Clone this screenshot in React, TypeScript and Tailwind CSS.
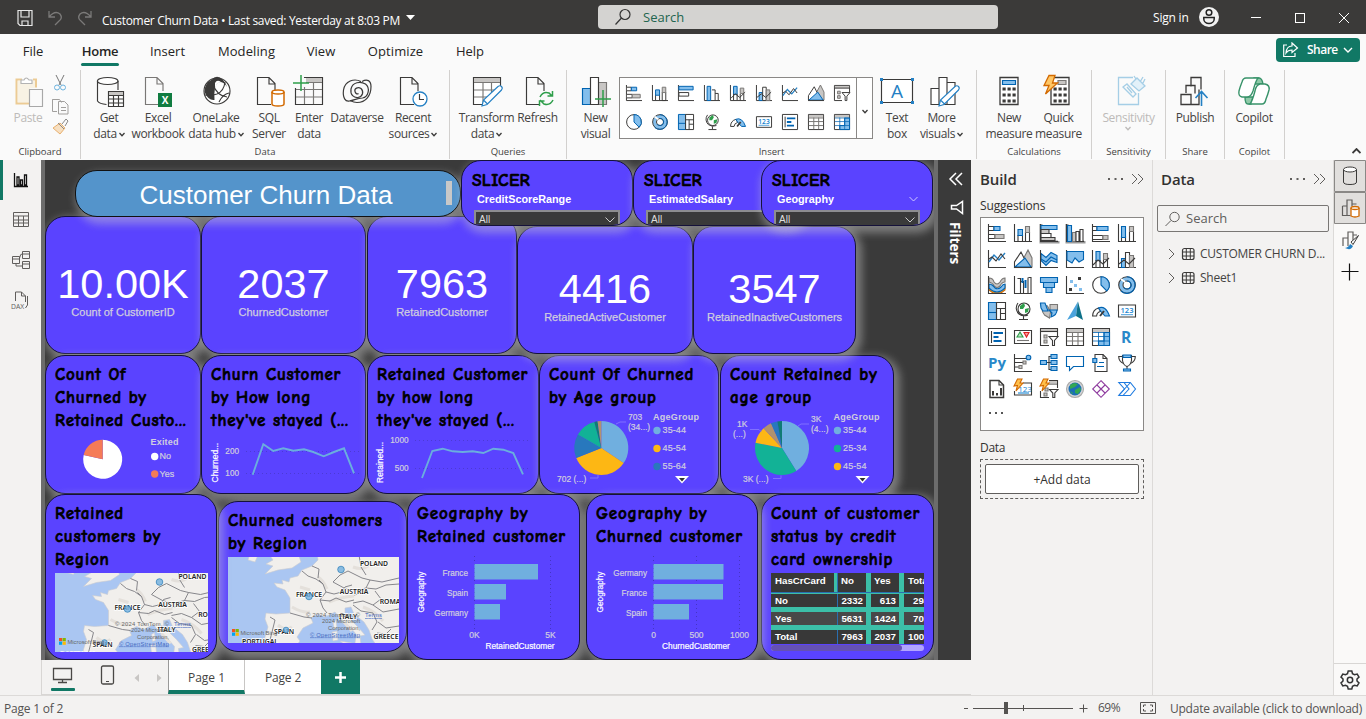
import React from "react";

type Kids = { children?: React.ReactNode };
const D = "#3b3a39";
const B = "#0063b1";
const F = "#83beec";
const G = "#c8c6c4";
const M = "#797775";
const O = "#d26900";

/* ---------- small visual icons, drawn on an 18 x 18 grid ---------- */
const Axis = () => <path d="M.5 0v17.5H18" stroke={D} />;
const Bolt = () => <path d="M3.5-1 8-1 6 3l3 0-7 8 1.500-5.500-3.500.5z" fill="#ffc04c" stroke={O} />;

const glyphs: Record<string, React.ReactNode> = {
  stackedBar: (<><Axis /><path d="M1 2.500h5v4H1" fill="#fff" stroke={D} /><path d="M6 2.500h6v4H6z" fill={F} stroke={B} /><path d="M1 10.500h6v4H1" fill="#fff" stroke={D} /><path d="M7 10.500h9v4H7z" fill={G} stroke={M} /></>),
  stackedCol: (<><Axis /><path d="M4 11v6M8.500 17v-6" stroke={D} /><path d="M4 5.500h4.500v6H4z" fill={F} stroke={B} /><path d="M11.500 8v9.500h4V8" stroke={D} /><path d="M11.500 2.500h4v6h-4z" fill={G} stroke={M} /></>),
  clusterBar: (<><Axis /><path d="M1 1.500h16v4H1z" fill={F} stroke={B} /><path d="M1 8.500h11v4H1z" fill="#fff" stroke={D} /></>),
  clusterCol: (<><Axis /><path d="M3.500 1.500h4v16h-4z" fill={F} stroke={B} /><path d="M9 5.500h3.500v12M12.500 9.500H16v8" stroke={D} /></>),
  clusterBarG: (<><path d="M1 0v18h17v-1" fill="none" stroke="#999" strokeWidth="3" /><Axis /><path d="M1 1.500h16v4H1z" fill={F} stroke={B} /><path d="M1 5.500h8v4H1z" fill={G} stroke={D} /><path d="M1 9.500h10v4H1z" fill="#fff" stroke={D} /><path d="M1 13.500h14v3H1z" fill={G} stroke={D} /></>),
  clusterColG: (<><path d="M1 0v18h17v-1" fill="none" stroke="#999" strokeWidth="3" /><Axis /><path d="M1.500 1.500h4v16h-4z" fill={F} stroke={B} /><path d="M6.500 8.500H10v9H6.500z" fill={G} stroke={M} /><path d="M10 7.500h3v10h-3zM14 5.500h3v12h-3z" fill="#fff" stroke={D} /></>),
  fullBar: (<><Axis /><path d="M1 2.500h4v4H1M1 11.500h10v4H1" fill="#fff" stroke={D} /><path d="M5 2.500h11v4H5z" fill={F} stroke={B} /><path d="M11 11.500h5v4h-5z" fill={G} stroke={M} /></>),
  fullCol: (<><Axis /><path d="M3.500 12v5.500h4V12M11.500 8v9.500h4V8" stroke={D} /><path d="M3.500 2.500h4v11h-4z" fill={F} stroke={B} /><path d="M11.500 2.500h4v5h-4z" fill={G} stroke={M} /></>),
  line: (<><Axis /><path d="M1 12 6 5l5 5 6-7" stroke="#2480c4" strokeWidth="1.400" /><path d="M1 9l3-2 4 4 5-7 4 5" stroke={D} /></>),
  area: (<><path d="M5 17 14 0l4 8v9z" fill={G} stroke={M} /><path d="M.5 17V12L7 2l4 8" fill="#fff" stroke={D} /><path d="M1 17 11 8l6 9z" fill={F} stroke={B} /><path d="M0 17.500h18" stroke={D} /></>),
  stackArea: (<><path d="M1 3.500l5 4 5-5 6 3v7l-6-2-5 5-5-5z" fill={F} stroke={B} /><path d="M1 9l5 3 5-5 6 3" stroke={B} /><Axis /></>),
  fullArea: (<><Axis /><path d="M1 1.500h16.500v8L13 12 9 8l-3 5-5-3z" fill={F} stroke={B} /></>),
  comboS: (<><Axis /><path d="M4 1.500h4v9H4z" fill={F} stroke={B} /><path d="M4 10v7M8 10v7M11.500 10v7M15.500 10v7" stroke={D} /><path d="M11.500 3.500h4v6h-4z" fill={G} stroke={M} /><path d="M1 15l5-5 5 4 6-6" stroke={D} /></>),
  comboC: (<><Axis /><path d="M3.500 8.500h4v9h-4z" fill={F} stroke={B} /><path d="M7.500 2.500h4v15h-4z" fill="#fff" stroke={D} /><path d="M11.500 5.500h4v12h-4z" fill={G} stroke={M} /><path d="M1 14l5-4 5 4 6-6" stroke={D} /></>),
  ribbon: (<><path d="M1 2q4 0 5 4 3 4 6 0 2-4 5-4v4q-3 0-5 4-3 3-6 0-1-3-5-4z" fill={G} stroke={M} /><path d="M1 9q4 0 6 5 3 3 6-1 1-3 4-4v5l-4 3H5l-4-3z" fill="#f0a030" stroke={O} /><path d="M1 8q3 0 6 4 3 2 6-1 2-3 4-3v4q-4 4-8 4T1 12z" fill={F} stroke={B} /><Axis /></>),
  waterfall: (<><Axis /><path d="M3.500 2.500h3v15M6.500 5.500h3v12M9.500 17v-11M14.500 1.500h2.500v16h-3v-16" stroke={D} /><path d="M8.500 2v5M11.500 4v8" stroke={B} strokeWidth="2" /></>),
  funnel: (<path d="M.5 1.500h17v5H.5zM3.500 6.500h11v5h-11zM6 11.500h6v5H6z" fill={F} stroke={B} />),
  scatter: (<><Axis /><path d="M4 4h3v3H4zM8 8h3v3H8zM13 12h3v3h-3z" fill={F} /><path d="M12 1h3v3h-3zM3 12h3v3H3z" fill={D} /></>),
  pie: (<><circle cx="9" cy="9" r="8.300" fill="#fff" stroke={D} /><path d="M9 .7A8.300 8.300 0 0 1 14.800 14.900L9 9z" fill={F} stroke={B} /></>),
  donut: (<><circle cx="9" cy="9" r="6.200" stroke={F} strokeWidth="4" /><circle cx="9" cy="9" r="8.300" stroke={D} /><circle cx="9" cy="9" r="4" stroke={D} /><path d="M9 .7A8.300 8.300 0 1 1 3 15M9 5a4 4 0 1 1-3 6.500" stroke={B} /><path d="M3 3l4 3" stroke="#fff" strokeWidth="2" /></>),
  treemap: (<><path d="M.5.5h8v17h-8z" fill={F} stroke={B} /><path d="M.5 10.500h8" stroke={B} /><path d="M8.500.5h9v17h-9zM8.500 6.500h9M12.500 6.500v11M12.500 11.500h5" stroke={D} /></>),
  map: (<><circle cx="10" cy="7" r="6" fill="#fff" stroke={D} /><path d="M6 4l4-3 1 3-2 3-3 0zM11 7l4-1-1 4-3 1z" fill="#2e9e4a" /><path d="M4 1a8 8 0 0 0 1 11q4 3 9 1M9.500 14v3M5 17.500h9" stroke={D} /></>),
  shape: (<><path d="M10 2.500h7.500V8L12 12l-2-2z" fill={G} stroke={M} /><path d="M.5 2l7 2 3 6-1 6-5-3Q2 10 2 7z" fill={G} stroke={M} /><path d="M.5 1 5 1l3 8-5 0-2-3zM9 8h8q0 5-6 7l1-4z" fill={F} stroke={B} /></>),
  arrow: (<><path d="M12-.5 1 18l9-4z" fill="#4ba3dd" /><path d="M12-.5 10 14l7 4z" fill="#0d7189" /></>),
  gauge: (<><path d="M.6 14a8.400 8.400 0 0 1 6-8l2 3.500a5 5 0 0 0-4 4.500z" fill="#fff" stroke={D} /><path d="M6.500 6q7-3 11 8h-4.500L9 9.500z" fill={F} stroke={B} /><path d="M8 14l4-5" stroke={D} strokeWidth="2" /></>),
  card: (<><path d="M.5 3h17v12H.5z" fill="#fff" stroke={D} /><text x="9" y="10.800" fontSize="7.500" fontFamily="Open Sans, sans-serif" fontWeight="600" fill="#1683d0" textAnchor="middle">123</text><path d="M3 12.700h12" stroke="#1683d0" strokeWidth=".8" /></>),
  multi: (<><path d="M.5.5h17v17H.5z" fill="#fff" stroke={D} /><path d="M3.500 3v12" stroke={D} /><path d="M5.500 5h9.500M5.500 9h5M5.500 13h8" stroke={B} strokeWidth="2" /></>),
  kpi: (<><path d="M.5 2.500h17v13H.5z" fill="#fff" stroke={D} /><path d="M6 4l3 5H3z" fill="#bfe5c5" stroke="#2e9e4a" /><path d="M10 4.500h5l-2.500 4.500z" fill="#f9a0a0" stroke="#d22" /><path d="M3 12.500h12" stroke={M} /></>),
  slicer: (<><path d="M17.500 8V.5H.5v17H9" stroke={D} /><path d="M1 1h16v2.500H1z" fill={G} /><path d="M.5 3.500h17" stroke={D} /><path d="M4 7h3v3H4zM4 12h3v3H4z" fill={G} stroke={M} /><path d="M9 8.500h9l-3.500 4v5h-2v-5z" fill="#fff" stroke={D} /></>),
  table: (<><path d="M.5.5h17v17H.5z" fill="#fff" stroke={D} /><path d="M1 1h16v3H1z" fill={G} /><path d="M1 4.500h16M1 8.500h16M1 13h16M6.500 4v13M12 4v13" stroke={M} /></>),
  matrix: (<><path d="M.5.5h17v17H.5z" fill="#fff" stroke={D} /><path d="M1 1h16v3H1z" fill={G} /><path d="M12 4.500h5.500v13h-11V13H12z" fill={F} stroke={B} /><path d="M1 4.500h16M1 8.500h16M1 13h16M6.500 4v13M12 4v13" stroke={B} strokeWidth=".8" /></>),
  r: <text x="8" y="14.500" fontSize="15.500" fontWeight="700" fontFamily="Open Sans, sans-serif" textAnchor="middle" fill="#2988c9">R</text>,
  py: <text x="9" y="13.500" fontSize="15" fontWeight="700" fontFamily="Open Sans, sans-serif" textAnchor="middle" fill="#2988c9">Py</text>,
  influencers: (<><path d="M.5 0v17.500H18M1 4.500h11M1 8.500h9M1 13h5" stroke={D} /><circle cx="14.500" cy="3.500" r="2.300" fill={F} stroke={B} /><path d="M9 7h3v3H9zM5 11.500h3v3H5z" fill={G} stroke={M} /></>),
  decomp: (<><path d="M6 8.500h5M9 8.500v-6h3M9 8.500v7h3" stroke={D} /><path d="M.5 6.500h6v4h-6zM11 .5h6v4h-6zM11 6.500h6v4h-6zM11 12.500h6v4h-6z" fill={F} stroke={B} /></>),
  qa: (<path d="M.5 2.500h17v10h-10l-4 4v-4h-3z" fill="#fff" stroke={B} />),
  narrative: (<><path d="M3 4V.5h8l4 4v13H3V9" fill="#fff" stroke={D} /><path d="M11 .5v4h4" stroke={D} /><path d="M.8 4.500h4v4h-4z" fill={F} stroke={B} /><path d="M7 8.500h5M5 12.500h7" stroke={B} /></>),
  trophy: (<><path d="M4.500 1.500h9v5q-1 5-4.500 6-3.500-1-4.500-6z" fill="#fff" stroke={D} /><path d="M4 2.500H.7q0 5 5 7M14 2.500h3.300q0 5-5 7M9 12v3" stroke={D} /><path d="M5 1h8v2.500H5zM5.500 15h7v2h-7z" fill={F} stroke={B} /></>),
  paginated: (<><path d="M2 .5h9l4.500 4.500v12.500H2z" fill="#fff" stroke={D} strokeWidth="1.500" /><path d="M11 .5V5h4.500" stroke={D} /><path d="M4 11h2v4.500H4zM8 13h2v2.500H8zM12 8h2v7.500h-2z" fill={D} /></>),
  boltCard: (<><path d="M9 3h8.500v12H.5v-4" fill="#fff" stroke={D} /><text x="11" y="11.500" fontSize="8" fontFamily="Open Sans, sans-serif" fill="#1683d0" textAnchor="middle">123</text><path d="M4 13h11" stroke="#1683d0" /><Bolt /></>),
  boltSlicer: (<><path d="M9 .5h8.500V8M.5 11v6.500H9M8 4h9.500" stroke={D} /><path d="M9 1h8v2.500H9z" fill={G} /><path d="M5 8h3v3H5zM4 13h3v3H4z" fill={G} stroke={M} /><path d="M9.500 9.500h8.500l-3.200 3.500v4.500h-2V13z" fill="#fff" stroke={D} /><Bolt /></>),
  globe: (<><circle cx="9" cy="9" r="8.500" fill="#d5d5d5" stroke="#aaa" /><circle cx="9" cy="9" r="6.500" fill="#1b6fb5" /><path d="M4 5l4-2 4 1-3 3-5 2zM9 10l5-3 1 3-3 4-3-1zM4 11l3 2-1 1z" fill="#33a852" /></>),
  powerapps: (<path d="M9 .7 17.300 9 9 17.300.7 9zM5 5l8 8M13 5l-8 8" fill="#fff" stroke="#8e3a9e" />),
  automate: (<><path d="M.8 2.500h11.500L17.500 9l-5.200 6.500H.8L6.500 9z" fill="#fff" stroke="#1f7be0" /><path d="M6 2.500 11 9l-6 6.500M1 15 12 3" stroke="#1f7be0" /></>),
};

function Glyph({ n, size = 18 }: { n: string; size?: number }) {
  return (
    <svg width={size} height={size} viewBox="0 0 18 18" fill="none" strokeWidth="1.100" className="block overflow-visible">
      {glyphs[n]}
    </svg>
  );
}

/* ---------- large ribbon icons, 32 x 32 ---------- */
const Doc = ({ c = D }: { c?: string }) => <path d="M16 29.500H2.500V2.500H14l6 6V16M14 2.500v6.500h6" stroke={c} />;
const Pencil = () => <path d="M11 31l1.500-6L27 11.500q2-1.500 3.500 0t0 3.500L16 29.500zM12.500 25l4 4" fill="#fff" stroke="#2480c4" />;
const Calc = ({ dx = 0 }: { dx?: number }) => (
  <g transform={`translate(${dx} 0)`}>
    <path d="M7 2.500h18v27H7z" fill="#fff" stroke={D} strokeWidth="1.300" />
    {[12.500, 18.500, 24.500].map((y) => [9.500, 14.500, 19.500].map((x) => <rect key={x + "-" + y} x={x} y={y} width="3.200" height="3" fill={D} />))}
  </g>
);
const big: Record<string, React.ReactNode> = {
  paste: (<><path d="M10 4.500H4.500v24H17M21 4.500h3v8" stroke="#eccb94" strokeWidth="2" /><path d="M6 6h17v7h-5v14H6z" fill="#f8f2e4" /><path d="M9 8.500V5h3q2-4 5 0h3v3.500z" fill="#fff" stroke="#b3b3b3" /><path d="M17.500 14.500h13v17h-13z" fill="#fafafa" stroke="#a8a8a8" /></>),
  get: (<><path d="M4.500 6v20q2 3 9 3.500M25 6v9" stroke={D} /><ellipse cx="14.700" cy="6" rx="10.300" ry="3.500" fill="#fff" stroke={D} /><path d="M15.500 16.500h15v15h-15z" fill="#fff" stroke={D} /><path d="M16 17h14v3H16z" fill={G} /><path d="M15.500 20.500h15M15.500 24h15M15.500 28h15M20.500 20v11M25.500 20v11" stroke={D} /></>),
  excel: (<g transform="translate(1 0)"><Doc c={M} /><path d="M15 18h14v14H15z" fill="#107c41" /><text x="22" y="28.500" fontSize="10" fontWeight="700" fontFamily="Open Sans, sans-serif" fill="#fff" textAnchor="middle">X</text></g>),
  onelake: (<><circle cx="17" cy="16" r="13" fill="#fff" stroke={D} /><path d="M12 4.500Q17-1 23 5q3 3 4 7-3-5-7-5-4 1-5 6-1 5-.5 12-6 1-10-8 0-9 7.500-12.500z" fill={D} /><path d="M13 9q4 12 14 13M25 7q-1 9-8 12-6 2-12 1M29 18q-6 1-10 9" stroke={D} /><path d="M15 8q2-4 6-1-5 1-6 7z" fill="#fff" /></>),
  sql: (<g transform="translate(2 0)"><Doc /><path d="M17 17v12q0 2 6 2t6-2V17" fill="#fff" stroke={O} strokeWidth="1.500" /><ellipse cx="23" cy="17" rx="6" ry="2" fill="#fff" stroke={O} strokeWidth="1.500" /></g>),
  enter: (<><path d="M11 2.500h18.500v27h-27V13" stroke={D} /><path d="M13 3h16v4H13z" fill={G} /><path d="M13 7.500h16M3 14.500h26M3 22h26M11.500 12v17M20.500 7v22" stroke={M} /><path d="M8 0v16M0 8h16" stroke="#2e9e4a" strokeWidth="1.500" /></>),
  dataverse: (<><path d="M20 6.500C13 3 4 6 2.500 15c-1 8 2 12 6 11 5-1 8-3 13-3 6-1 8-10 3-14-5-3-13-2-14.500 5-1 6 3 9 7 8.500 5-1 6-6 3-9-3-2-7 0-6 3 .5 2 2 3 3.500 2" stroke={D} strokeWidth="1.200" /><path d="M21 6.500c5-3 9-1 9 5 0 9-5 16-14 16-3 0-5-1-7-2" stroke={D} strokeWidth="1.200" /></>),
  recent: (<g transform="translate(1 0)"><Doc /><circle cx="22" cy="24" r="7" fill="#fff" stroke="#2480c4" strokeWidth="1.300" /><path d="M21.500 19v5.500H26" stroke={D} /></g>),
  transform: (<><path d="M2.500 2.500h27v27h-27z" fill="#fff" stroke={D} /><path d="M3 3h26v4H3z" fill={G} /><path d="M3 7.500h26M3 15h26M3 22h26M12 7v22M20.500 7v22" stroke={M} /><path d="M13 31 31 13v19H13z" fill="#fafafa" /><Pencil /></>),
  refresh: (<g transform="translate(2 0)"><Doc /><path d="M16 22q3-6 9-4l3 3M28.500 16v5h-5M29 25q-3 6-9 4l-4-4M15.500 31v-5h5" stroke="#2e9e4a" strokeWidth="1.500" /></g>),
  newvis: (<><path d="M2.500 13.500H11v16H2.500z" fill={F} stroke={B} /><path d="M18 7.500h8.500v22H18z" fill={G} stroke={M} /><path d="M10.500 2.500h8v27h-8z" fill="#fff" stroke={D} /><path d="M23 15v17M15 24h16" stroke="#2e9e4a" strokeWidth="1.500" /></>),
  text: (<><path d="M.5 4.500h31v23H.5z" fill="#fff" stroke={D} /><path d="M-1 3h3v3h-3zM30 3h3v3h-3zM-1 26h3v3h-3zM30 26h3v3h-3z" fill="#2480c4" /><text x="16" y="23" fontSize="19" fontFamily="Open Sans, sans-serif" fill="#2480c4" textAnchor="middle">A</text></>),
  more: (<><path d="M5 13.500h8v16H5zM13 2.500h8v27h-8zM21 7.500h8v22h-8z" fill="#fff" stroke={D} /><g transform="translate(2 0)"><Pencil /></g></>),
  calc: (<><Calc /><path d="M9.500 5.500h13v4h-13z" fill={F} stroke={B} /></>),
  quick: (<><Calc dx={1} /><path d="M15 5.500h8v4h-8z" fill={G} stroke={M} /><path d="M6 .5h6L9.500 8h5L2.500 19 6 10.500H1z" fill="#ffc766" stroke={O} strokeWidth="1.300" /></>),
  sens: (<g stroke="#a5cee6" strokeWidth="1.300" transform="translate(2 0)"><path d="M18 2.500H3.500v27h20V18" /><path d="M8 12l4-3 9 10-3 3zM12 12l5 6" /><path d="M16 9l6-6 8 8-6 5zM21 4l-2-3M28 8l2-4M25 7l3-5" fill="#e3f1f9" /></g>),
  publish: (<><path d="M12 11.500v-9h10v12M7 18v-7.500h9v8M2 19.500h10v10H2zM12 29.500h8v-15" stroke={D} strokeWidth="1.300" /><path d="M22.500 31V17M16.500 23l6-6.500 6 6.500" stroke="#2480c4" strokeWidth="1.600" /></>),
  copilot: (<g stroke="#38936a" strokeWidth="1.400"><path d="M16 3h5q3 0 4 6h-9zM7 22h8l-2 7h-3q-3 0-3-7z" fill="#8fc9a8" /><path d="M8 3h12q-2 2-5 13-2 6-6 6H4q-4-1-3-6 1-4 3-9 1-4 4-4zM24 29H12q2-2 5-13 1-6 5-7h5q5 1 4 6-1 4-3 9-1 5-4 5z" fill="#fff" /></g>),
};
function Big({ n }: { n: string }) {
  return <svg width="32" height="32" viewBox="0 0 32 32" fill="none" strokeWidth="1.150" className="block overflow-visible">{big[n]}</svg>;
}
const Chev = ({ c = D }: { c?: string }) => (
  <svg width="6" height="5" viewBox="0 0 6 5" fill="none" className="inline-block"><path d="M.5 1 3 3.700 5.500 1" stroke={c} strokeWidth="1.300" /></svg>
);

function Item({ icon, a, b, chev, w, dim }: { icon: string; a: string; b?: string; chev?: boolean; w: string; dim?: boolean }) {
  return (
    <div className={`flex shrink-0 flex-col items-center ${w} ${dim ? "text-[#bdbbb9]" : "text-[#444342]"}`}>
      <Big n={icon} />
      <div className="mt-[3px] whitespace-nowrap text-center text-[12px] leading-4 tracking-[-0.35px]">
        <div>{a}</div>
        <div className="flex items-center justify-center gap-[2px]">{b}{chev && <Chev c={dim ? "#bdbbb9" : D} />}</div>
      </div>
    </div>
  );
}
function Group({ w, label, pad = "", children }: Kids & { w: string; label: string; pad?: string }) {
  return (
    <div className={`flex h-[89px] shrink-0 flex-col border-r border-[#d2d0ce] ${w}`}>
      <div className={`flex h-[76px] items-start pt-[5px] ${pad}`}>{children}</div>
      <div className="mt-[1px] text-center text-[9.500px] leading-[15px] text-[#444342]">{label}</div>
    </div>
  );
}

function TitleBar() {
  return (
    <div className="flex h-[34px] shrink-0 items-center bg-[#3b3a39] text-[12px] text-white">
      <svg width="90" height="34" viewBox="0 0 90 34" fill="none" className="ml-[10px] shrink-0">
        <path d="M8 10.500h14v15h-12l-2-2zM11 11v6h8v-6M12 25v-4h6v4" stroke="#e8e8e8" strokeWidth="1.200" />
        <path d="M39 11v6h6M39 17q6-7 11-3 3 4-1 7l-4 4" stroke="#7b7a79" strokeWidth="1.300" />
        <path d="M81 11v6h-6M81 17q-6-7-11-3-3 4 1 7l4 4" stroke="#7b7a79" strokeWidth="1.300" />
      </svg>
      <div className="ml-[2px] mt-[7px] w-[299px] whitespace-nowrap tracking-[-0.31px]">Customer Churn Data • Last saved: Yesterday at 8:03 PM</div>
      <svg width="9" height="6" className="ml-[5px] mt-[2px]" viewBox="0 0 9 6"><path d="M0 0h9L4.500 5z" fill="#fff" /></svg>
      <div className="ml-[183px] flex h-6 w-[400px] items-center rounded-sm bg-[#d4d3d1] text-[13px] text-[#22654f]">
        <svg width="18" height="18" viewBox="0 0 18 18" fill="none" className="ml-4"><circle cx="11" cy="6.500" r="5" stroke="#333" strokeWidth="1.200" /><path d="M7.500 10 1.500 16.500" stroke="#333" strokeWidth="1.200" /></svg>
        <span className="ml-[11px] pt-[1px]">Search</span>
      </div>
      <span className="ml-[155px] w-[37px] whitespace-nowrap pt-[2px] tracking-[-0.2px]">Sign in</span>
      <svg width="20" height="20" viewBox="0 0 20 20" className="ml-[9px]"><circle cx="10" cy="10" r="10" fill="#f1f1f1" /><circle cx="10" cy="5.500" r="2.800" fill="none" stroke="#222" strokeWidth="1.500" /><path d="M4.800 10.500h10.400v1.500a5.200 4.500 0 0 1-10.400 0z" fill="none" stroke="#222" strokeWidth="1.500" /></svg>
      <svg width="100" height="12" viewBox="0 0 100 12" fill="none" stroke="#fff" className="ml-[32px] mt-[1px] shrink-0"><path d="M0 5.500h10M88 1l10 10M98 1 88 11" /><rect x="44.500" y="1.500" width="9" height="9" /></svg>
    </div>
  );
}

function Tabs() {
  const tabs: [string, string, string][] = [
    ["File", "ml-[22px] w-[22px]", ""],
    ["Home", "ml-[37px] w-[38px]", ""],
    ["Insert", "ml-[31px] w-[35px]", ""],
    ["Modeling", "ml-[32px] w-[59px]", "tracking-[0.1px]"],
    ["View", "ml-[30px] w-[30px]", ""],
    ["Optimize", "ml-[31px] w-[57px]", "tracking-[0.1px]"],
    ["Help", "ml-[31px] w-[30px]", ""],
  ];
  return (
    <div className="flex h-9 shrink-0 items-center text-[13px] text-[#252423]">
      {tabs.map(([t, box, tr]) => (
        <div key={t} className={`mt-[-2px] flex shrink-0 flex-col items-center whitespace-nowrap ${box}`}>
          <span className={t === "Home" ? "font-semibold tracking-[-0.3px]" : tr}>{t}</span>
          <span className={`mb-[-6px] mt-[2px] h-[3px] w-[38px] rounded-sm ${t === "Home" ? "bg-[#117865]" : ""}`} />
        </div>
      ))}
      <div className="ml-auto mr-[6px] mt-[-4px] flex h-6 w-[84px] items-center rounded bg-[#117865] text-[12px] font-semibold text-white">
        <svg width="16" height="16" viewBox="0 0 16 16" fill="none" stroke="#fff" strokeWidth="1.200" className="ml-[7px]"><path d="M4 3H.700v11.500H12V11M9 1l5.500 5L9 10.500V8Q5 8 3 11 3.500 4 9 4z" /></svg>
        <span className="ml-[8px] tracking-[-0.5px]">Share</span>
        <svg width="10" height="7" viewBox="0 0 10 7" fill="none" stroke="#fff" strokeWidth="1.400" className="ml-[5px]"><path d="M1 1l4 4 4-4" /></svg>
      </div>
    </div>
  );
}

const gallery = [
  ["stackedBar", "stackedCol", "clusterBar", "clusterCol", "comboS", "comboC", "line", "area", "slicer"],
  ["pie", "donut", "treemap", "map", "gauge", "card", "multi", "table", "matrix"],
];

function Ribbon() {
  return (
    <div className="flex h-[90px] shrink-0 items-start">
      <Group w="w-[81px]" label="Clipboard" pad="pl-[10px]">
        <Item icon="paste" a="Paste" w="w-[36px]" dim />
        <svg width="18" height="64" viewBox="0 0 18 64" fill="none" className="ml-[5px] overflow-visible">
          <path d="M5 0l5 10M13 0 8 10" stroke="#777" /><circle cx="6" cy="12.500" r="2.500" stroke="#6db3de" /><circle cx="12" cy="12.500" r="2.500" stroke="#6db3de" />
          <path d="M6 24.500H1.500v12H6M1.500 24.500h7l2 3M7.500 26.500h6l3.500 3.500v9H7.500zM10 32.500h5M10 35.500h5" stroke="#a19f9d" />
          <path d="M2 53l7-5 5 5-5 6z" fill="#f7dfc0" stroke="#e8b06f" /><path d="M7 48l6 6M11 49l4-5 2 2-3 5" stroke="#8a8886" />
        </svg>
      </Group>
      <Group w="w-[369px]" label="Data" pad="pl-[3px]">
        <Item icon="get" a="Get" b="data" chev w="w-[50px]" />
        <Item icon="excel" a="Excel" b="workbook" w="w-[48px]" />
        <Item icon="onelake" a="OneLake" b="data hub" chev w="w-[68px]" />
        <Item icon="sql" a="SQL" b="Server" w="w-[38px]" />
        <Item icon="enter" a="Enter" b="data" w="w-[42px]" />
        <Item icon="dataverse" a="Dataverse" w="w-[54px]" />
        <Item icon="recent" a="Recent" b="sources" chev w="w-[58px]" />
      </Group>
      <Group w="w-[117px]" label="Queries" pad="pl-[5px]">
        <Item icon="transform" a="Transform" b="data" chev w="w-[63px]" />
        <Item icon="refresh" a="Refresh" w="w-[39px]" />
      </Group>
      <Group w="w-[410px]" label="Insert" pad="pl-[6px]">
        <Item icon="newvis" a="New" b="visual" w="w-[45px]" />
        <div className="ml-[1px] mt-[2px] flex h-[62px] w-[254px] shrink-0 border border-[#8a8886] bg-white">
          <div className="flex flex-1 flex-col gap-[13px] pl-[6px] pt-[7px]">
            {gallery.map((row, i) => (
              <div key={i} className="flex gap-[10px]">{row.map((g) => <Glyph key={g} n={g} size={16} />)}</div>
            ))}
          </div>
          <div className="flex w-4 items-center justify-center border-l border-[#8a8886] pt-[6px]"><Chev /></div>
        </div>
        <Item icon="text" a="Text" b="box" w="w-[48px]" />
        <Item icon="more" a="More" b="visuals" chev w="w-[41px]" />
      </Group>
      <Group w="w-[115px]" label="Calculations" pad="pl-[7px]">
        <Item icon="calc" a="New" b="measure" w="w-[50px]" />
        <Item icon="quick" a="Quick" b="measure" w="w-[49px]" />
      </Group>
      <Group w="w-[74px]" label="Sensitivity" pad="pl-[6px]"><Item icon="sens" a="Sensitivity" b="" chev w="w-[61px]" dim /></Group>
      <Group w="w-[59px]" label="Share" pad="pl-[5px]"><Item icon="publish" a="Publish" w="w-[48px]" /></Group>
      <Group w="w-[60px]" label="Copilot" pad="pl-[5px]"><Item icon="copilot" a="Copilot" w="w-[48px]" /></Group>
      <svg width="9" height="6" viewBox="0 0 9 6" fill="none" className="ml-[67px] mt-[78px]"><path d="M.5 5l4-4 4 4" stroke={D} strokeWidth="1.800" /></svg>
    </div>
  );
}

/* ---------- report canvas ---------- */
const card = "relative flex shrink-0 flex-col rounded-[20px] border border-[#15123a] bg-[#5a43ff] shadow-[3px_4px_9px_3px_rgba(205,205,205,0.45)]";
const comic = "font-['Comic_Sans_MS','Comic_Neue','Lato',sans-serif] font-black text-black [-webkit-text-stroke:0.6px_#000]";

function Kpi({ v, label, cls }: { v: string; label: string; cls: string }) {
  return (
    <div className={`${card} items-center ${cls}`}>
      <div className="text-[41.500px] leading-[42px] text-white">{v}</div>
      <div className="whitespace-nowrap text-[11px] leading-[14px] text-[#d0cde0] [-webkit-text-stroke:0.25px_#d0cde0]">{label}</div>
    </div>
  );
}
function Panel({ lines, cls, children }: Kids & { lines: string[]; cls: string }) {
  return (
    <div className={`${card} ${cls}`}>
      <div className={`mb-[-1px] shrink-0 pl-[9px] pt-[7px] ${comic} text-[17px] leading-[23px] tracking-[0.8px]`}>
        {lines.map((l) => <div key={l} className="whitespace-nowrap">{l}</div>)}
      </div>
      {children}
    </div>
  );
}
function Slicer({ name, cls, chev }: { name: string; cls: string; chev?: boolean }) {
  return (
    <div className={`${card} h-[66px] overflow-hidden ${cls}`}>
      <div className={`ml-[10px] mt-[8px] ${comic} text-[17.500px] leading-[22px] tracking-[0.3px]`}>SLICER</div>
      <div className="ml-[15px] mr-[14px] mt-[-1px] flex items-center justify-between whitespace-nowrap text-[10.800px] font-bold leading-[18px] text-white">
        <span>{name}</span>
        {chev && <svg width="9" height="6" viewBox="0 0 9 6" fill="none" stroke="#cfcaff"><path d="M.5 1l4 4 4-4" /></svg>}
      </div>
      <div className="ml-[12px] mt-[2px] flex h-[19px] w-[146px] shrink-0 items-center justify-between border-2 border-[#8d8d90] bg-[#3a3a3a] pl-[3px] pr-[3px] text-[10px] leading-[14px] text-[#dedede]">
        <span>All</span>
        <svg width="10" height="6" viewBox="0 0 10 6" fill="none" stroke="#ccc"><path d="M.5 .500l4.500 4.500 4.500-4.500" /></svg>
      </div>
    </div>
  );
}

function Pie({ cx, cy, r, parts }: { cx: number; cy: number; r: number; parts: [number, string][] }) {
  let a = 0;
  const pt = (d: number) => `${(cx + r * Math.sin((d * Math.PI) / 180)).toFixed(2)} ${(cy - r * Math.cos((d * Math.PI) / 180)).toFixed(2)}`;
  return (
    <>
      {parts.map(([end, c]) => {
        const d = `M${cx} ${cy}L${pt(a)}A${r} ${r} 0 ${end - a > 180 ? 1 : 0} 1 ${pt(end === 360 ? 359.99 : end)}Z`;
        a = end;
        return <path key={c} d={d} fill={c} />;
      })}
    </>
  );
}
function Chart({ vb, w, h, children }: Kids & { vb: string; w: number; h: number }) {
  return <svg width={w} height={h} viewBox={vb} className="block shrink-0 overflow-visible" fill="#d0cde0" fontFamily="Liberation Sans, Arial, sans-serif" fontSize="9">{children}</svg>;
}
const axisText = { stroke: "#d0cde0", strokeWidth: 0.2 };
const whiteText = { fill: "#fff", stroke: "#fff", strokeWidth: 0.2 };

function Legend({ x, items }: { x: number; items: [string, string][] }) {
  return (
    <>
      <text x={x} y="420" fontSize="9" fontWeight="700" textLength="46">AgeGroup</text>
      {items.map(([t, c], i) => (
        <g key={t}><circle cx={x + 4} cy={430.500 + i * 18} r="3.700" fill={c} /><text x={x + 9.500} y={433 + i * 18} fontSize="9" textLength="23.500" {...axisText}>{t}</text></g>
      ))}
      <path d={`M${x + 22} 476h14l-7 7.500z`} fill="#fff" /><path d={`M${x + 26} 478h6l-3 3.500z`} fill="#333" />
    </>
  );
}
function Bars({ vb, rows, ticks, x0, lx, title, tx, ax }: { vb: string; rows: [string, number][]; ticks: [string, number][]; x0: number; lx: number; title: string; tx: number; ax: number }) {
  return (
    <Chart vb={vb} w={170} h={110}>
      {ticks.map(([t, x]) => (<g key={t}><path d={`M${x} 556v75`} stroke="#4434c4" strokeDasharray="1 3" /><text x={x} y="638" textAnchor="middle" fontSize="8.500" {...axisText}>{t}</text></g>))}
      {rows.map(([t, w], i) => (<g key={t}><text x={lx} y={575.500 + i * 20} textAnchor="end" fontSize="8.200" {...axisText}>{t}</text><rect x={x0} y={564 + i * 20} width={w} height="15.500" fill="#70afdf" /></g>))}
      <text x={tx} y="649" textAnchor="middle" fontSize="8.300" {...whiteText}>{title}</text>
      <text transform={`translate(${ax} 592) rotate(-90)`} textAnchor="middle" fontSize="8.300" {...whiteText}>Geography</text>
    </Chart>
  );
}

function EuropeMap({ w, h, dx, dy, cls }: { w: number; h: number; dx: number; dy: number; cls: string }) {
  const names: [string, number, number][] = [["POLAND", 146, 9], ["FRANCE", 81, 40], ["AUSTRIA", 126, 37], ["ITALY", 120, 62], ["SPAIN", 56, 77], ["ROMA", 162, 47], ["GREECE", 158, 82], ["PORTUGAL", 32, 87]];
  return (
    <svg width={w} height={h} viewBox={`0 0 ${w} ${h}`} className={`block shrink-0 overflow-hidden ${cls}`} fontFamily="Noto Sans, sans-serif">
      <rect width={w} height={h} fill="#aac6f2" />
      <g transform={`translate(${-dx} ${-dy})`}>
        <path d="M40-4H70L73 5 64 11 50 13 37 17 45 9 38 7 45 3ZM22-4h9l-4 9-7-2z" fill="#f1efec" stroke="#c9cbd0" strokeWidth=".6" />
        <path d="M89-4 90 3 84 9 74 13 70 19 62 21 61 25 54 23 55 27 46 26 49 30 57 33 62 41 62 56 48 57 38 56 37 62 40 70 37 80 35 92H66L72 84 69 80 75 71 85 66 83 61 90 57 97 60 107 55 113 63 121 69 128 77 127 86 124 92 133 88 132 79 137 78 130 70 123 63 117 57 117 51 123 50 126 57 136 65 141 73 144 82 151 92H190V-4ZM105 65l3-2 1 8-3 1zM104 75l5-1 1 9-5 1zM112 84l12 2-3 5z" fill="#f1efec" stroke="#c9cbd0" strokeWidth=".6" />
        <path d="M64 50q10 6 18 5M50 68q8 7 14 2M90 20q5 3 9 12M101 45q12-5 25-6M115 64l9 10M135 50q12 4 20 14M125 10q10 4 16-2M72 30l10 3" stroke="#e4e0db" strokeWidth="3" fill="none" />
        <path d="M62 56l14 4 8 1M74 14l6 5 8 3 7 5 3 8-6 8 3 8 4 5M84 9l7 3-1 9M95 27l-4-4M98 35l8 2 8-2 3-5 7-2M92 43l10 1 6-3 10 4 8-2M131-2l2 12 5 8M105 25l7-7 8-4 14 7 8 2-4 8-12 3-10-3zM142 23l12 2 17-4M138 31l10 1 10-4 13-1M126 38l8-2 4-5M125 46l10-2 10 4 8-6-6-8M125 48l8 6 12 2 4 9-5 8M145 48l10 7 16-3M150 65l8 6 13-2M149 76l9 1 5-5M42 60l5 3-3 12-3 12" stroke="#7b7b80" strokeWidth=".9" fill="none" strokeLinejoin="round" />
        {names.map(([t, x, y]) => <text key={t} x={x} y={y} fontSize="6.800" fontWeight="600" fill="#222" stroke="#fff" strokeWidth="1.500" paintOrder="stroke" textAnchor="middle">{t}</text>)}
        {[[113, 12.500, 3.300], [81, 39.500, 3.300], [58, 73, 2.800]].map(([x, y, r]) => <circle key={x} cx={x} cy={y} r={r} fill="#70afdf" fillOpacity=".8" stroke="#3a86bd" strokeWidth=".8" />)}
      </g>
      <g transform={`translate(${w} ${h})`} fontSize="5.800" fill="#666" fontFamily="Liberation Sans, sans-serif" textAnchor="end">
        <text x="-39" y="-26" textLength="54">© 2024 TomTom, ©</text><text x="-17" y="-26" fill="#4267c0" textDecoration="underline" textLength="17">Terms</text>
        <text x="-39" y="-20">2024 Microsoft</text><text x="-39" y="-13.500">Corporation,</text>
        <text x="-39" y="-6.500" fill="#4267c0" textDecoration="underline" textLength="50">© OpenStreetMap</text>
        <text x={-w + 12.500} y="-8" textAnchor="start">Microsoft Bing</text>
      </g>
      <path d={`M4 ${h - 14}h3.200v3.200H4z`} fill="#f25022" /><path d={`M7.600 ${h - 14}h3.200v3.200H7.600z`} fill="#7fba00" /><path d={`M4 ${h - 10.400}h3.200v3.200H4z`} fill="#00a4ef" /><path d={`M7.600 ${h - 10.400}h3.200v3.200H7.600z`} fill="#ffb900" />
    </svg>
  );
}

function CreditTable() {
  const cell = "flex shrink-0 items-center overflow-hidden whitespace-nowrap";
  const rows: [string, string, string, string, string, string][] = [
    ["HasCrCard", "No", "Yes", "Total", "h-[20px]", "bg-[#383838]"],
    ["No", "2332", "613", "2945", "h-[13px]", "bg-[#383838]"],
    ["Yes", "5631", "1424", "7055", "h-[13px]", "bg-[#484848]"],
    ["Total", "7963", "2037", "10000", "h-[14px]", "bg-[#383838]"],
  ];
  return (
    <div className="ml-[9px] w-[153px] overflow-hidden">
      <div className="flex h-[71px] flex-col justify-between bg-[#3cbfa8] text-[9.700px] font-bold leading-[12px] text-white">
        {rows.map(([a, b, c, d, h, bg], i) => (
          <div key={i} className={`flex shrink-0 ${h} ${i === 0 ? "mb-[-4px] border-b border-[#2a6fb0]" : ""}`}>
            <div className={`${cell} ${bg} pl-[4px] ${i === 0 ? "w-[63px] pb-[3px]" : "w-[66px]"}`}>{a}</div>
            <div className={`${cell} ${bg} border-l border-[#2a6fb0] ${i ? "ml-0 w-[29px] justify-end pr-[3px]" : "ml-[3px] w-[29px] pb-[3px] pl-[3px]"}`}>{b}</div>
            <div className={`${cell} ${bg} ml-[5px] w-[28px] ${i ? "justify-end pr-[3px]" : "pb-[3px] pl-[3px]"}`}>{c}</div>
            <div className={`${cell} ${bg} ml-[5px] w-[40px] ${i === 0 ? "pb-[3px]" : ""} ${i === 0 || i === 3 ? "pl-[4px]" : "pl-[9px]"}`}>{d}</div>
          </div>
        ))}
      </div>
      <div className="mt-[1px] h-[6px] rounded-full bg-[#b1a4ff]"><div className="h-full w-[131px] rounded-full bg-[#6551b4]" /></div>
    </div>
  );
}

function Canvas() {
  return (
    <div className="flex h-[500px] w-[930px] shrink-0 overflow-hidden bg-[#3a3a3a] font-['Liberation_Sans',Arial,sans-serif]">
      <div className="h-full w-[893px] shrink-0 overflow-hidden border-l-4 border-[#6c6c6c] bg-[#3a3a3a]">
        <div className="flex items-start">
          <div className="relative z-30 ml-[30px] mt-[10px] flex h-[47px] w-[386px] shrink-0 items-center justify-center rounded-[22px] border border-[#111] bg-[#5494cb] pr-[4px] pt-[3px] text-[26px] text-white shadow-[3px_5px_9px_2px_rgba(205,205,205,0.45)]">
            <span>Customer Churn Data</span>
            <div className="absolute right-[8px] top-[10px] h-[24px] w-[6px] bg-[#c8c8c8]" />
          </div>
          <Slicer name="CreditScoreRange" cls="z-30 w-[172px]" />
          <Slicer name="EstimatedSalary" cls="z-30 w-[172px]" />
          <Slicer name="Geography" cls="z-40 ml-[-44px] w-[172px]" chev />
        </div>
        <div className="mt-[-10px] flex items-end">
          <Kpi v="10.00K" label="Count of CustomerID" cls="z-[1] h-[138px] w-[156px] pt-[46px]" />
          <Kpi v="2037" label="ChurnedCustomer" cls="z-[1] h-[138px] w-[165px] pt-[46px]" />
          <Kpi v="7963" label="RetainedCustomer" cls="z-[1] ml-px h-[138px] w-[150px] pt-[46px]" />
          <Kpi v="4416" label="RetainedActiveCustomer" cls="z-20 h-[128px] w-[176px] pt-[41px]" />
          <Kpi v="3547" label="RetainedInactiveCustomers" cls="z-20 h-[128px] w-[163px] pt-[41px]" />
        </div>
        <div className="mt-[1px] flex items-start">
          <Panel lines={["Count Of", "Churned by", "Retained Custo..."]} cls="z-[2] h-[139px] w-[156px]">
            <Chart vb="46 431 154 62" w={154} h={62}>
              <Pie cx={102.700} cy={459.300} r={19.500} parts={[[283, "#ffffff"], [360, "#f57b57"]]} />
              <text x="150.500" y="445" fontWeight="700" textLength="28">Exited</text>
              <circle cx="154.700" cy="456.500" r="3.700" fill="#fff" /><text x="159.500" y="459" {...axisText}>No</text>
              <circle cx="154.700" cy="474" r="3.700" fill="#f57b57" /><text x="159.500" y="477" {...axisText}>Yes</text>
            </Chart>
          </Panel>
          <Panel lines={["Churn Customer", "by How long", "they've stayed (..."]} cls="z-[2] h-[139px] w-[165px]">
            <Chart vb="202 431 163 62" w={163} h={62}>
              <path d="M246 451.500h114M246 473.500h114" stroke="#4c3ad4" strokeDasharray="1 3" />
              <text x="239" y="454" textAnchor="end" fontSize="8.200" {...axisText}>200</text><text x="239" y="476" textAnchor="end" fontSize="8.200" {...axisText}>100</text>
              <text transform="translate(218 482.500) rotate(-90)" fontSize="8.500" {...whiteText}>Churned...</text>
              <polyline points="252.700,474.700 263.300,444.300 273.300,451 283.300,448.300 293.300,450.700 304,449.300 313.300,452 323.700,456.300 334,452 344,448.300 354,473.300" fill="none" stroke="#6aaede" strokeWidth="1.900" />
            </Chart>
          </Panel>
          <Panel lines={["Retained Customer", "by how long", "they've stayed (..."]} cls="z-[2] ml-px h-[139px] w-[172px]">
            <Chart vb="368 431 170 62" w={170} h={62}>
              <path d="M415 440.500h114M415 468.500h114" stroke="#4c3ad4" strokeDasharray="1 3" />
              <text x="408.500" y="443" textAnchor="end" fontSize="8.200" {...axisText}>1000</text><text x="408.500" y="471" textAnchor="end" fontSize="8.200" {...axisText}>500</text>
              <text transform="translate(383 483) rotate(-90)" fontSize="8.500" {...whiteText}>Retained...</text>
              <polyline points="422,478 432.300,451 442.700,448.700 452.700,451.300 462.700,452 472.700,451.300 483.300,453 493.300,448.700 503.300,449.700 513.300,453 523,474.300" fill="none" stroke="#6aaede" strokeWidth="1.900" />
            </Chart>
          </Panel>
          <Panel lines={["Count Of Churned", "by Age group"]} cls="z-[2] h-[139px] w-[180px]">
            <Chart vb="540 408 178 85" w={178} h={85}>
              <Pie cx={601.300} cy={448} r={27} parts={[[124, "#70afdf"], [248, "#fdb714"], [300, "#2878bd"], [345, "#12b296"], [352, "#107c74"], [360, "#b1916f"]]} />
              <path d="M616 424l4-2h6M590 478h8v-3" stroke="#8070ff" fill="none" />
              <text x="628" y="420" fontSize="8.500" {...axisText}>703</text><text x="628" y="430" fontSize="8.500" {...axisText}>(34...)</text><text x="557" y="481.500" fontSize="8.500" {...axisText}>702 (...)</text>
              <Legend x={653} items={[["35-44", "#70afdf"], ["45-54", "#fdb714"], ["55-64", "#2878bd"]]} />
            </Chart>
          </Panel>
          <Panel lines={["Count Retained by", "age group"]} cls="z-[2] ml-px h-[139px] w-[174px]">
            <Chart vb="721 408 172 85" w={172} h={85}>
              <Pie cx={782} cy={448} r={27} parts={[[148, "#70afdf"], [281, "#12b296"], [317, "#fdb714"], [336, "#b1916f"], [350, "#2878bd"], [360, "#107c74"]]} />
              <path d="M798 426l3-2h8M750 429.500h9l2 2M773 478.500h8v-3" stroke="#8070ff" fill="none" />
              <text x="737" y="427" fontSize="8.500" {...axisText}>1K</text><text x="733" y="437" fontSize="8.500" {...axisText}>(...)</text><text x="811" y="422" fontSize="8.500" {...axisText}>3K</text><text x="811" y="432" fontSize="8.500" {...axisText}>(4...)</text><text x="743" y="481.500" fontSize="8.500" {...axisText}>3K (...)</text>
              <Legend x={833.500} items={[["35-44", "#70afdf"], ["25-34", "#12b296"], ["45-54", "#fdb714"]]} />
            </Chart>
          </Panel>
        </div>
        <div className="flex items-start">
          <Panel lines={["Retained", "customers by", "Region"]} cls="z-[4] h-[166px] w-[172px]"><EuropeMap w={153} h={79} dx={8.500} dy={3.500} cls="ml-[9px] mt-[3px]" /></Panel>
          <Panel lines={["Churned customers", "by Region"]} cls="z-[3] ml-[1px] mt-[7px] h-[151px] w-[189px]"><EuropeMap w={171} h={86} dx={0} dy={0} cls="ml-[9px] mt-[3px]" /></Panel>
          <Panel lines={["Geography by", "Retained customer"]} cls="z-[4] h-[166px] w-[173px]">
            <Bars vb="408 547 170 110" x0={474.500} lx={468} ax={424} tx={520} title="RetainedCustomer" rows={[["France", 63.500], ["Spain", 31.500], ["Germany", 25.500]]} ticks={[["0K", 474.500], ["5K", 550.500]]} />
          </Panel>
          <Panel lines={["Geography by", "Churned customer"]} cls="z-[4] ml-[6px] h-[166px] w-[172px]">
            <Bars vb="587 547 170 110" x0={653.500} lx={647} ax={603} tx={696} title="ChurnedCustomer" rows={[["Germany", 70], ["France", 69.500], ["Spain", 35.500]]} ticks={[["0", 653.500], ["500", 696.500], ["1000", 739.500]]} />
          </Panel>
          <Panel lines={["Count of customer", "status by credit", "card ownership"]} cls="z-[3] ml-[3px] h-[166px] w-[173px]"><div className="mt-[3px]"><CreditTable /></div></Panel>
        </div>
      </div>
      <div className="relative z-50 flex h-full w-[37px] shrink-0 flex-col items-center border-l-4 border-[#6c6c6c] bg-[#3a3a3a] text-white">
        <svg width="14" height="46" viewBox="0 0 14 46" fill="none" stroke="#fff" strokeWidth="1.500" className="ml-[2px] mt-[12px] overflow-visible"><path d="M7 1 1 7l6 6M13 1 7 7l6 6" /><path d="M2.500 33.500h5l6-4v12l-6-4.500h-5z" /></svg>
        <div className="ml-[1px] mt-[4px] font-['Open_Sans',sans-serif] text-[13.500px] font-bold leading-4 [writing-mode:vertical-rl]">Filters</div>
      </div>
    </div>
  );
}

function LeftRail() {
  return (
    <div className="w-[41px] shrink-0 bg-[#f3f2f1]">
      <svg width="41" height="160" viewBox="0 0 41 160" fill="none">
        <path d="M0 0h3v40H0z" fill="#117865" />
        <path d="M14.500 13v13.500H28M17 17h2v8h-2zM20.500 20h2v5h-2zM24.500 15h2v10h-2z" stroke="#111" strokeWidth="1.300" />
        <path d="M13.500 52.500h15v14h-15zM13.500 56h15M13.500 60h15M13.500 63h15M18.500 56v10M23.500 56v10" stroke="#605e5c" />
        <path d="M12.500 96.500h7v7h-7zM22.500 91.500h7v7h-7zM22.500 101.500h7v7h-7zM12.500 99h7M22.500 94h7M22.500 104h7M19.500 98q1-5 3-4M16 104v2h6" stroke="#605e5c" />
        <path d="M15.500 141v-9h6l4 4v6M21.500 132v4h4M27.500 136v9l-2 3" stroke="#605e5c" />
        <text x="11" y="148.500" fontSize="6.800" fill="#605e5c" fontFamily="Open Sans, sans-serif">DAX</text>
      </svg>
    </div>
  );
}

function PageTabs() {
  return (
    <div className="flex h-[36px] border-b border-l border-[#d8d6d4] text-[12px] text-[#444342]">
      <svg width="126" height="34" viewBox="0 0 126 34" fill="none" className="shrink-0">
        <path d="M11.500 8.500h18v11h-18zM20.500 20v2.500M16 22.500h9" stroke="#4a4846" strokeWidth="1.300" /><rect x="9" y="28" width="24" height="3" rx="1" fill="#117865" />
        <rect x="59.500" y="6" width="12" height="18" rx="1.500" stroke="#4a4846" strokeWidth="1.300" /><path d="M64 21.500h3" stroke="#4a4846" />
        <path d="M97 14v8l-4.500-4zM115 14v8l4.500-4z" fill="#c8c6c4" />
      </svg>
      <div className="flex w-[77px] items-center justify-center border-b-4 border-l border-r border-b-[#117865] border-l-[#999] border-r-[#c8c6c4] bg-white pt-[6px]">Page 1</div>
      <div className="flex w-[76px] items-center justify-center bg-white pb-px pt-[2px] tracking-[-0.15px]">Page 2</div>
      <div className="flex w-[39px] items-center justify-center bg-[#117865]"><svg width="11" height="11"><path d="M5.500 0v11M0 5.500h11" stroke="#fff" strokeWidth="2.500" /></svg></div>
    </div>
  );
}

const buildIcons = ["stackedBar", "stackedCol", "clusterBarG", "clusterColG", "fullBar", "fullCol", "line", "area", "stackArea", "fullArea", "comboS", "comboC", "ribbon", "waterfall", "funnel", "scatter", "pie", "donut", "treemap", "map", "shape", "arrow", "gauge", "card", "multi", "kpi", "slicer", "table", "matrix", "r", "py", "influencers", "decomp", "qa", "narrative", "trophy", "paginated", "boltCard", "boltSlicer", "globe", "powerapps", "automate"];

function PaneHead({ t }: { t: string }) {
  return (
    <div className="flex h-[38px] items-center text-[15px] font-semibold text-[#323130]">
      <span className="tracking-[-0.1px]">{t}</span>
      <svg width="37" height="14" viewBox="0 0 37 14" fill="none" stroke="#605e5c" className="ml-auto mr-[-1px]"><path d="M25 2l5 5-5 5M31 2l5 5-5 5" /><path d="M1 6h2v2H1zM7.500 6h2v2h-2zM14 6h2v2h-2z" fill="#605e5c" stroke="none" /></svg>
    </div>
  );
}

function RightPanes() {
  return (
    <>
      <div className="w-[182px] shrink-0 border-r border-[#dcdad8] bg-[#f3f2f1] pl-[9px] pr-[9px] text-[#323130]">
        <PaneHead t="Build" />
        <div className="mt-[-1px] text-[12px] leading-[17px] tracking-[-0.15px]">Suggestions</div>
        <div className="mt-[3px] h-[214px] w-[164px] border border-[#8a8886] bg-white pl-[7px] pt-[6px]">
          <div className="grid w-[156px] grid-cols-6 gap-y-2">{buildIcons.map((g) => <Glyph key={g} n={g} />)}</div>
          <div className="flex gap-[4px] pl-[1px] pt-[14px]"><i className="size-[2px] bg-[#555]" /><i className="size-[2px] bg-[#555]" /><i className="size-[2px] bg-[#555]" /></div>
        </div>
        <div className="mt-[8px] text-[12px] leading-[18px] tracking-[-0.3px]">Data</div>
        <div className="mt-[2px] h-[40px] w-[164px] border border-dashed border-[#605e5c] p-[4px]">
          <div className="flex h-full items-center justify-center rounded-[2px] border border-[#605e5c] bg-white pt-[2px] text-[12px]">+Add data</div>
        </div>
      </div>
      <div className="w-[181px] shrink-0 border-r border-[#dcdad8] bg-[#f3f2f1] pl-[4px] pr-[4px] text-[#444342]">
        <div className="pl-[4px] pr-[4px]"><PaneHead t="Data" /></div>
        <div className="mt-[7px] flex h-[27px] items-center rounded-[2px] border border-[#797775] text-[13px] text-[#605e5c]">
          <svg width="16" height="16" viewBox="0 0 16 16" fill="none" stroke="#605e5c" className="ml-[7px]"><circle cx="9.500" cy="6" r="4.700" /><path d="M6 9.500.5 15" /></svg>
          <span className="ml-[5px] pt-[1px]">Search</span>
        </div>
        <div className="pt-[10px]">
          {["CUSTOMER CHURN D...", "Sheet1"].map((t) => (
            <div key={t} className="flex h-6 items-center whitespace-nowrap text-[12px] tracking-[-0.25px]">
              <svg width="28" height="14" viewBox="0 0 28 14" fill="none" className="ml-[11px] mr-[4px] shrink-0"><path d="M1 2l5 5-5 5" stroke="#605e5c" /><rect x="14.500" y="1.500" width="11.500" height="11" rx="2" stroke={D} strokeWidth="1.200" /><path d="M14 5h12M14 9h12M18.300 1.500v11M22.300 1.500v11" stroke={D} /></svg>
              <span>{t}</span>
            </div>
          ))}
        </div>
      </div>
      <div className="flex w-[32px] shrink-0 flex-col bg-[#faf9f8]">
        <svg width="32" height="130" viewBox="0 0 32 130" fill="none">
          <path d="M.5.5h31v31H.5zM.5 32.500h31v31H.5z" fill="#e1dfdd" stroke="#8a8886" />
          <ellipse cx="16" cy="9.500" rx="6.500" ry="2.500" fill="#fff" stroke={D} /><path d="M9.500 9.500V22q0 2.500 6.500 2.500t6.500-2.500V9.500" stroke={D} />
          <path d="M8.500 46v9.500h8M13 55V40h5v6M8.500 46H13M18 44h4.500" stroke="#605e5c" strokeWidth="1.200" /><path d="M17 48v8q4 2 8 0v-8" fill="#fff" stroke={O} strokeWidth="1.300" /><ellipse cx="21" cy="48" rx="4" ry="1.500" fill="#fff" stroke={O} strokeWidth="1.300" />
          <path d="M9 86v-8h5v8M14 78v-6h5v8M19 75h4" stroke="#605e5c" strokeWidth="1.200" /><path d="M24.500 75.500 17 82l2 2.500z" fill="#fff" stroke={D} /><path d="M11 88q4-1 5-4l3 2q-2 5-8 2z" fill="#2480c4" />
          <path d="M7.500 111.500h17M15.500 103.500v17" stroke="#111" strokeWidth="1.200" />
        </svg>
        <div className="mt-auto flex h-[32px] items-center justify-center border-t border-[#d8d6d4]">
          <svg width="20" height="20" viewBox="0 0 20 20" fill="none" stroke="#333" strokeWidth="1.500"><path d="M8.200 1h3.600l.7 2.700 2 1 2.700-.7 1.800 3.100-2 1.900v2l2 1.900-1.800 3.100-2.700-.7-2 1-.7 2.700H8.200l-.7-2.700-2-1-2.700.7L1 12.900 3 11V9L1 7.100 2.800 4l2.700.7 2-1z" /><circle cx="10" cy="10" r="2.700" /></svg>
        </div>
      </div>
    </>
  );
}

export default function App() {
  return (
    <div className="flex h-[719px] w-[1366px] flex-col overflow-hidden bg-[#fafafa] font-['Open_Sans','Noto_Sans',sans-serif]">
      <TitleBar />
      <Tabs />
      <Ribbon />
      <div className="flex h-[536px] shrink-0 border-b border-[#dcdad8] bg-[#f3f2f1]">
        <LeftRail />
        <div className="flex w-[930px] shrink-0 flex-col">
          <Canvas />
          <PageTabs />
        </div>
        <RightPanes />
      </div>
      <div className="flex h-[23px] shrink-0 items-center bg-[#f3f2f1] text-[12px] text-[#555351]">
        <span className="ml-[4px] pt-[2px] tracking-[-0.2px]">Page 1 of 2</span>
        <svg width="126" height="16" viewBox="0 0 126 16" fill="none" stroke="#555351" className="ml-auto mr-[9px]"><path d="M1 8.500h4M10 8.500h100M60.500 5v6M116.500 8.500h8M120.500 4.500v8" /><path d="M41 2h4v12h-4z" fill="#555351" stroke="none" /></svg>
        <span className="w-[24px] tracking-[-0.5px]">69%</span>
        <svg width="16" height="14" viewBox="0 0 16 14" fill="none" stroke="#555351" className="ml-[18px]"><path d="M.5 1.500h15v11H.5zM3.500 6V4h2.500M10 4h2.500v2M3.500 8v2h2.500M10 10h2.500V8" /></svg>
        <span className="ml-[14px] w-[196px] whitespace-nowrap pt-[2px] tracking-[-0.24px]">Update available (click to download)</span>
      </div>
    </div>
  );
}
